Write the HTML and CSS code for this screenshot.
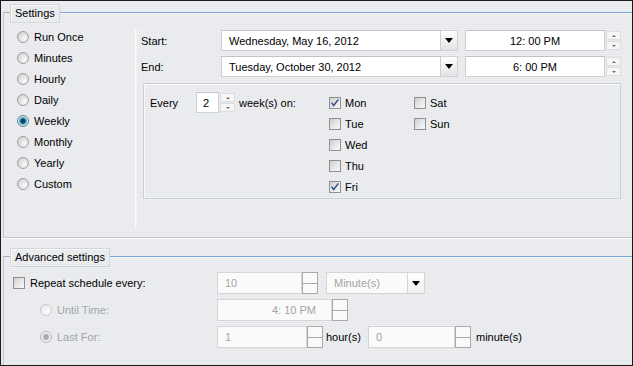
FILE: index.html
```html
<!DOCTYPE html>
<html>
<head>
<meta charset="utf-8">
<title>Schedule</title>
<link rel="stylesheet" href="styles.css">
</head>
<body>
<div class="win">
  <section class="group settings">
    <div class="legend-row"><span class="dash"></span><span class="legend">Settings</span><span class="rule"></span></div>
    <div class="body">
      <ul class="radios">
        <li><span class="radio"></span>Run Once</li>
        <li><span class="radio"></span>Minutes</li>
        <li><span class="radio"></span>Hourly</li>
        <li><span class="radio"></span>Daily</li>
        <li><span class="radio on"></span>Weekly</li>
        <li><span class="radio"></span>Monthly</li>
        <li><span class="radio"></span>Yearly</li>
        <li><span class="radio"></span>Custom</li>
      </ul>
      <div class="divider"></div>
      <div class="right">
        <div class="row">
          <span class="lbl">Start:</span>
          <div class="field date"><span class="box">Wednesday, May 16, 2012</span><span class="drop"><i></i></span></div>
          <div class="field time"><span class="box center">12: 00 PM</span><span class="spin"><b class="up"></b><b class="down"></b></span></div>
        </div>
        <div class="row">
          <span class="lbl">End:</span>
          <div class="field date"><span class="box">Tuesday, October 30, 2012</span><span class="drop"><i></i></span></div>
          <div class="field time"><span class="box center">6: 00 PM</span><span class="spin"><b class="up"></b><b class="down"></b></span></div>
        </div>
        <div class="inner">
          <div class="every">
            <span class="every-lbl">Every</span>
            <div class="field num"><span class="box">2</span><span class="spin"><b class="up"></b><b class="down"></b></span></div>
            <span class="week-lbl">week(s) on:</span>
          </div>
          <ul class="days col1">
            <li><span class="check on"><svg viewBox="0 0 12 12" width="12" height="12"><path d="M2.6 5.6 L4.7 8.4 L9.4 2.4" fill="none" stroke="#2f4f7f" stroke-width="1.5"/></svg></span>Mon</li>
            <li><span class="check"></span>Tue</li>
            <li><span class="check"></span>Wed</li>
            <li><span class="check"></span>Thu</li>
            <li><span class="check on"><svg viewBox="0 0 12 12" width="12" height="12"><path d="M2.6 5.6 L4.7 8.4 L9.4 2.4" fill="none" stroke="#2f4f7f" stroke-width="1.5"/></svg></span>Fri</li>
          </ul>
          <ul class="days col2">
            <li><span class="check"></span>Sat</li>
            <li><span class="check"></span>Sun</li>
          </ul>
        </div>
      </div>
    </div>
  </section>

  <section class="group adv">
    <div class="legend-row"><span class="dash"></span><span class="legend">Advanced settings</span><span class="rule"></span></div>
    <div class="body adv-body">
      <div class="arow">
        <span class="alabel"><span class="check"></span>Repeat schedule every:</span>
        <div class="field dis w85"><span class="box">10</span><span class="spin dspin"><b></b><b></b></span></div>
        <div class="field dis w83 gap8"><span class="box">Minute(s)</span><span class="drop"><i></i></span></div>
      </div>
      <div class="arow">
        <span class="alabel sub dtext"><span class="radio dis"></span>Until Time:</span>
        <div class="field dis w115"><span class="box rightal">4: 10 PM</span><span class="spin dspin"><b></b><b></b></span></div>
      </div>
      <div class="arow">
        <span class="alabel sub dtext"><span class="radio dis on"></span>Last For:</span>
        <div class="field dis w90"><span class="box">1</span><span class="spin dspin"><b></b><b></b></span></div>
        <span class="unit u1">hour(s)</span>
        <div class="field dis w87"><span class="box">0</span><span class="spin dspin"><b></b><b></b></span></div>
        <span class="unit u2">minute(s)</span>
      </div>
    </div>
  </section>
</div>
</body>
</html>
```

FILE: styles.css
```css
* { box-sizing: border-box; }
html, body { margin: 0; padding: 0; }
ul { list-style: none; margin: 0; padding: 0; }

.win {
  width: 633px;
  height: 366px;
  border: 1px solid #1b1b1b;
  background: repeating-linear-gradient(to bottom, #eceef0 0 1px, #e6e8eb 1px 2px);
  font: 11px "Liberation Sans", Arial, sans-serif;
  color: #000;
  display: flex;
  flex-direction: column;
  overflow: hidden;
}

.group { margin-left: 2px; }

.settings {
  height: 237px;
  border-bottom: 1px solid #c7cacd;
  box-shadow: 0 1px 0 #fbfbfb;
  display: flex;
  flex-direction: column;
}

.legend-row {
  height: 23px;
  display: flex;
  flex: none;
}
.dash {
  align-self: flex-end;
  width: 7px;
  height: 12px;
  border-top: 1px solid #a9adb2;
  border-left: 1px solid #c3c6ca;
}
.legend {
  margin-top: 3px;
  height: 19px;
  padding: 0 4px;
  line-height: 17px;
  border: 1px solid #d3d6d9;
  box-shadow: inset 1px 1px 0 #fafafa;
}
.rule {
  flex: 1;
  align-self: flex-start;
  margin-top: 11px;
  height: 2px;
  border-top: 1px solid #7ba4d8;
  border-bottom: 1px solid #f7f8fa;
}

.body {
  flex: 1;
  border-left: 1px solid #c3c6ca;
  display: flex;
}

/* radios */
.radios {
  width: 131px;
  padding: 2px 0 0 13px;
}
.radios li {
  height: 21px;
  display: flex;
  align-items: center;
  gap: 5px;
}
.radio {
  width: 12px;
  height: 12px;
  border-radius: 50%;
  border: 1px solid #9ea1a4;
  background: radial-gradient(circle at 65% 65%, #fbfbfb 0, #e3e3e3 45%, #c9c9c9 100%);
  flex: none;
}
.radio.on {
  border-color: #5d7f95;
  background: radial-gradient(circle, #0b3f5c 0 1.6px, #1f7aa3 2.4px, #4aa6cc 3.4px, #dfe6ea 4.4px, #e9e9e9 100%);
}
.radio.dis {
  border-color: #cacdd0;
  background: radial-gradient(circle at 65% 65%, #fafafa 0, #eeeeee 60%, #e2e2e2 100%);
}
.radio.dis.on {
  border-color: #b3b6b9;
  background: radial-gradient(circle, #a7a9ab 0 2px, #c9cbcd 3px, #f3f3f3 4px, #ececec 100%);
}

.divider {
  width: 2px;
  margin-top: 6px;
  height: 197px;
  background: #fdfdfd;
  border-right: 1px solid #f1f2f3;
  flex: none;
}

/* right panel */
.right {
  flex: 1;
  padding-top: 6px;
}
.row {
  height: 21px;
  display: flex;
  align-items: center;
  margin-bottom: 5px;
  padding-left: 4px;
}
.lbl { width: 80px; }

.field {
  display: flex;
  height: 21px;
}
.box {
  flex: 1;
  background: #fff;
  border: 1px solid #ccd0d4;
  border-top-color: #bfc3c8;
  display: flex;
  align-items: center;
  padding-left: 7px;
  white-space: nowrap;
  overflow: hidden;
}
.box.center { justify-content: center; padding-left: 0; }
.box.rightal { justify-content: flex-end; padding-right: 15px; }

.date { width: 237px; }
.time { width: 156px; margin-left: 7px; }
.num { width: 39px; }
.num .box { padding-left: 6px; }

.drop {
  width: 17px;
  border: 1px solid #cfd2d5;
  border-left: none;
  background: linear-gradient(#ffffff, #eeeeee 60%, #e3e3e3);
  display: flex;
  align-items: center;
  justify-content: center;
}
.drop i {
  width: 0;
  height: 0;
  border-left: 4px solid transparent;
  border-right: 4px solid transparent;
  border-top: 5px solid #000;
}

.spin {
  width: 16px;
  display: flex;
  flex-direction: column;
  gap: 1px;
  padding: 1px 0;
}
.spin b {
  flex: 1;
  display: flex;
  align-items: center;
  justify-content: center;
  background: #f6f6f6;
  border: 1px solid #dcdee0;
  margin-left: 1px;
}
.spin b.up::after, .spin b.down::after {
  content: "";
  width: 0; height: 0;
  border-left: 2px solid transparent;
  border-right: 2px solid transparent;
}
.spin b.up::after { border-bottom: 2px solid #6b6b6b; }
.spin b.down::after { border-top: 2px solid #6b6b6b; }

.dspin { padding: 0; gap: 0; }
.dspin b {
  margin-left: 0;
  background: #f9f9f9;
  border: 1px solid #a9a9a9;
  border-left: 1px solid #a9a9a9;
}
.dspin b + b { border-top: none; }

/* inner group */
.inner {
  margin: 6px 0 0 6px;
  width: 478px;
  height: 116px;
  border: 1px solid #cdd0d3;
  box-shadow: inset 1px 1px 0 #f8f8f9;
  padding: 8px 0 0 6px;
  display: flex;
  align-items: flex-start;
}
.every {
  width: 179px;
  height: 21px;
  display: flex;
  align-items: center;
}
.every-lbl { width: 46px; }
.week-lbl { margin-left: 4px; }

.days li {
  height: 21px;
  display: flex;
  align-items: center;
  gap: 4px;
}
.col1 { width: 85px; }

.check {
  width: 12px;
  height: 12px;
  border: 1px solid #8e9093;
  background: linear-gradient(135deg, #cfcfcf, #eaeaea 60%, #f8f8f8);
  flex: none;
  display: flex;
}
.check svg { margin: -1px; }

/* advanced */
.adv {
  flex: 1;
  padding-top: 7px;
  display: flex;
  flex-direction: column;
}
.adv-body {
  flex-direction: column;
  padding: 4px 0 0 9px;
  gap: 5px;
}
.arow {
  height: 22px;
  display: flex;
  align-items: center;
}
.alabel {
  width: 204px;
  display: flex;
  align-items: center;
  gap: 5px;
}
.alabel.sub { padding-left: 27px; }
.dtext { color: #a3a6a9; }

.field.dis { height: 22px; }
.dis .box {
  background: #fafafa;
  border-color: #d4d6d8;
  color: #a3a5a7;
}
.dis .drop {
  border-color: #d4d6d8;
  background: linear-gradient(#ffffff, #f0f0f0);
}
.w85 { width: 101px; }
.w83 { width: 99px; }
.w115 { width: 131px; }
.w90 { width: 106px; }
.w87 { width: 103px; }
.gap8 { margin-left: 8px; }
.unit { color: #000; }
.u1 { margin-left: 3px; width: 42px; }
.u2 { margin-left: 5px; }
```
